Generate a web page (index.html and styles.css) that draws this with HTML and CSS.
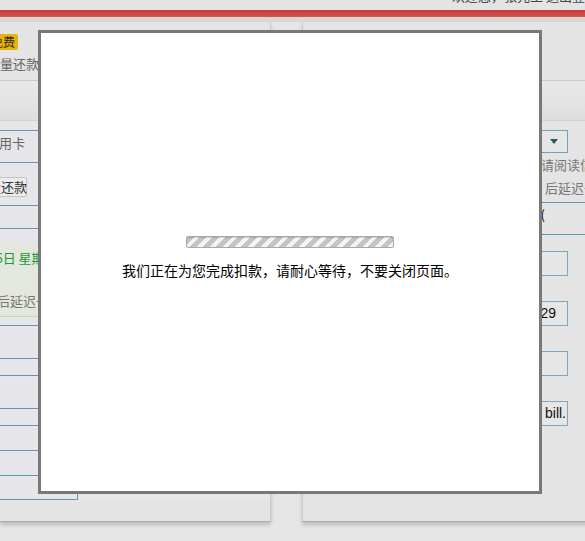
FILE: index.html
```html
<!DOCTYPE html>
<html lang="zh-CN">
<head>
<meta charset="utf-8">
<title>信用卡还款</title>
<link rel="stylesheet" href="styles.css">
</head>
<body>
<div class="page">
  <div class="topbar"><div class="toplinks">欢迎您，张先生 退出登录 &nbsp;| 帮助中心</div></div>
  <div class="redbar"></div>
  <div class="subbar"></div>
  <div class="main">
    <div class="panel left">
      <div class="intro">
        <span class="badge">免费</span>
        <div class="intro-text">批量还款</div>
      </div>
      <div class="band"></div>
      <div class="rows">
        <div class="spacer"></div>
        <div class="row r31"><span class="cell-text">信用卡</span></div>
        <div class="row r42"><span class="btn">批量还款</span></div>
        <div class="row r22"></div>
        <div class="row r96">
          <div class="greenbox">
            <div class="green-text">5月26日 星期二</div>
            <div class="grey-text">还款后延迟一天到账</div>
          </div>
        </div>
        <div class="row r32"></div>
        <div class="row r16"></div>
        <div class="row r32"></div>
        <div class="row r16"></div>
        <div class="row r24"></div>
        <div class="row r24"></div>
        <div class="row r24"><div class="tail"></div></div>
      </div>
    </div>
    <div class="panel right">
      <div class="intro"></div>
      <div class="band"></div>
      <div class="form">
        <div class="spacer"></div>
        <div class="select"><span class="caret"></span></div>
        <div class="note n1">请阅读信用卡还款须知</div>
        <div class="note n2">后延迟一天到账</div>
        <div class="row r32 tline"><div class="paren">还款金额 (</div></div>
        <div class="fields">
          <div class="field"></div>
          <div class="field v29">29</div>
          <div class="field"></div>
          <div class="field vbill">bill.</div>
        </div>
      </div>
    </div>
  </div>
  <div class="modal">
    <div class="progress"></div>
    <p class="wait">我们正在为您完成扣款，请耐心等待，不要关闭页面。</p>
  </div>
</div>
</body>
</html>
```
FILE: styles.css
```css
html, body {
  margin: 0;
  padding: 0;
  overflow: hidden;
  background: #e6e6e6;
}
.page {
  position: relative;
  width: 585px;
  height: 541px;
  overflow: hidden;
  background: #e6e6e6;
  font-family: "Noto Sans CJK SC", "Liberation Sans", sans-serif;
  font-size: 13px;
  color: #666;
}
.topbar {
  height: 10px;
  overflow: hidden;
  background: #e4e4e4;
}
.toplinks {
  margin-top: -11px;
  padding-left: 452px;
  white-space: nowrap;
  line-height: 14px;
  font-size: 13px;
  color: #444;
}
.redbar {
  height: 7px;
  background: linear-gradient(#c53b3b, #d85252);
}
.subbar {
  height: 5px;
  background: #d7d7d7;
}
.main {
  display: flex;
  gap: 31px;
  height: 519px;
}
.panel {
  box-sizing: border-box;
  height: 500px;
  background: #e4e4e4;
  border-bottom: 1px solid #a9a9a9;
  box-shadow: 0 3px 4px rgba(0,0,0,0.18);
}
.panel.left {
  width: 271px;
  flex: none;
  border-right: 1px solid #cbcbcb;
}
.panel.right {
  flex: none;
  width: 300px;
  border-left: 1px solid #cbcbcb;
}
.intro {
  box-sizing: border-box;
  height: 59px;
  padding-top: 10px;
  border-bottom: 1px solid #c9c9c9;
}
.badge {
  display: inline-block;
  margin-left: -11px;
  padding: 0 3px 0 2px;
  height: 16px;
  line-height: 16px;
  font-size: 12px;
  background: #e2b40c;
  color: #3a2a00;
  border-radius: 2px;
}
.intro-text {
  margin-top: 5px;
  margin-left: -13px;
  line-height: 16px;
  font-size: 13px;
  color: #666;
  white-space: nowrap;
}
.band {
  height: 39px;
  background: linear-gradient(#e9e9e9, #dedede);
  border-bottom: 1px solid #d2d2d2;
}
.rows {
  background: #e6e5e9;
  height: 380px;
}
.spacer { height: 9px; }
.row {
  box-sizing: border-box;
  border-top: 1px solid #5d9aab;
  box-shadow: inset 0 1px 0 #f1e3e9;
  overflow: hidden;
}
.r16 { height: 17px; }
.r22 { height: 23px; }
.r24 { height: 25px; }
.r31 { height: 32px; }
.r32 { height: 33px; }
.r42 { height: 43px; }
.r96 { height: 97px; }
.cell-text {
  display: block;
  margin-left: -14px;
  line-height: 24px;
  white-space: nowrap;
  color: #666;
}
.btn {
  display: block;
  box-sizing: border-box;
  width: 53px;
  margin-left: -26px;
  margin-top: 14px;
  height: 20px;
  line-height: 18px;
  text-align: right;
  padding-right: 2px;
  border: 1px solid #c4c4c4;
  border-radius: 2px;
  background: #ececec;
  color: #333;
  white-space: nowrap;
}
.greenbox {
  box-sizing: border-box;
  margin-top: 13px;
  height: 75px;
  padding-top: 8px;
  background: #e3e7de;
  border-bottom: 1px solid #bfdcae;
  white-space: nowrap;
}
.green-text {
  margin-left: -32px;
  line-height: 16px;
  color: #1f9a35;
}
.grey-text {
  margin-left: -29px;
  margin-top: 27px;
  line-height: 16px;
  color: #777;
}
.tail {
  margin-top: 18px;
  width: 77px;
  height: 5px;
  border-right: 1px solid #5d9aab;
  border-bottom: 1px solid #5d9aab;
}
.form {
  height: 380px;
  background: #e4e4e4;
}
.select {
  box-sizing: border-box;
  margin-left: 140px;
  width: 125px;
  height: 23px;
  border: 1px solid #6fa2b8;
  background: #e6e6e6;
  display: flex;
  align-items: center;
  justify-content: flex-end;
  padding-right: 9px;
}
.caret {
  width: 0;
  height: 0;
  border-left: 4px solid transparent;
  border-right: 4px solid transparent;
  border-top: 5px solid #2a5866;
}
.note {
  margin-left: 238px;
  white-space: nowrap;
  line-height: 20px;
  color: #777;
}
.n1 { margin-top: 2px; }
.n2 { margin-top: 3px; margin-bottom: 4px; margin-left: 242px; }
.tline { border-bottom: 1px solid #5d9aab; }
.paren {
  width: 242px;
  text-align: right;
  line-height: 24px;
  color: #000;
  white-space: nowrap;
}
.fields {
  display: flex;
  flex-direction: column;
  gap: 25px;
  padding-top: 16px;
}
.field {
  box-sizing: border-box;
  margin-left: 165px;
  width: 100px;
  height: 25px;
  border: 1px solid #7fa7c0;
  background: #e6e6e6;
  font-family: "Liberation Sans", Arial, sans-serif;
  font-size: 14px;
  line-height: 23px;
  color: #111;
  text-align: right;
}
.v29 { padding-right: 11px; }
.vbill { padding-right: 1px; }
.modal {
  position: absolute;
  left: 38px;
  top: 30px;
  box-sizing: border-box;
  width: 504px;
  height: 464px;
  border: 3px solid #787878;
  background: #fff;
  padding-top: 203px;
  display: flex;
  flex-direction: column;
  align-items: center;
}
.progress {
  box-sizing: border-box;
  width: 208px;
  height: 12px;
  border: 1px solid #a8a8a8;
  border-radius: 2px;
  background: repeating-linear-gradient(135deg, #c4c4c4 0, #c4c4c4 5px, #f4f4f4 5px, #f4f4f4 9px);
  box-shadow: inset 0 1px 1px rgba(0,0,0,0.15);
}
.wait {
  margin: 13px 0 0;
  font-size: 14px;
  line-height: 18px;
  color: #000;
  white-space: nowrap;
}
```
